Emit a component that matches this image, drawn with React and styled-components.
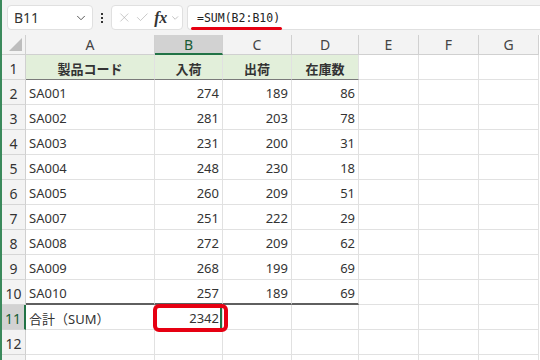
import React from "react";
import styled, { createGlobalStyle } from "styled-components";
import { X, Check, ChevronDown } from "lucide-react";

const GREEN = "#217346";
const GRID = "#e1e1e1";

const COLUMNS = [
  { id: "A", width: 129 },
  { id: "B", width: 68 },
  { id: "C", width: 69 },
  { id: "D", width: 67 },
  { id: "E", width: 60 },
  { id: "F", width: 60 },
  { id: "G", width: 60 },
];

const ROWS = [
  ["SA001", 274, 189, 86],
  ["SA002", 281, 203, 78],
  ["SA003", 231, 200, 31],
  ["SA004", 248, 230, 18],
  ["SA005", 260, 209, 51],
  ["SA007", 251, 222, 29],
  ["SA008", 272, 209, 62],
  ["SA009", 268, 199, 69],
  ["SA010", 257, 189, 69],
];

const GlobalStyle = createGlobalStyle`
  body {
    margin: 0;
    background: #fff;
    font-family: "Noto Sans", "Noto Sans CJK JP", sans-serif;
  }
`;

const Window = styled.div`
  width: 540px;
  height: 360px;
  overflow: hidden;
  border-left: 2px solid #3b8a5c;
  box-sizing: border-box;
  background: #fff;
`;

const Toolbar = styled.div`
  height: 35px;
  box-sizing: border-box;
  padding: 5px 0 0 5px;
  background: #f3f3f3;
  display: flex;
  align-items: flex-start;
  gap: 4px;
`;

const Box = styled.div`
  height: 25px;
  box-sizing: border-box;
  background: #fff;
  border: 1px solid #e0e0e0;
  border-radius: 4px;
  display: flex;
  align-items: center;
`;

const NameBox = styled(Box)`
  width: 86px;
  padding: 0 4px 0 6px;
  justify-content: space-between;
  font-size: 14px;
  color: #333;
`;

const Dots = styled.div`
  width: 10px;
  height: 25px;
  display: flex;
  flex-direction: column;
  align-items: center;
  justify-content: center;
  gap: 2px;

  span {
    width: 2px;
    height: 2px;
    background: #333;
  }
`;

const ButtonBox = styled(Box)`
  width: 72px;
  padding: 0 2px 0 5px;
  gap: 3px;
  color: #a8a8a8;
`;

const Fx = styled.span`
  font-family: "Liberation Serif", serif;
  font-style: italic;
  font-weight: 700;
  font-size: 16px;
  color: #333;
  margin-left: 2px;
  letter-spacing: -0.5px;
`;

const FormulaBox = styled(Box)`
  flex: 1;
  border-right: none;
  border-radius: 4px 0 0 4px;
  padding-left: 9px;
`;

const Formula = styled.span`
  position: relative;
  font-family: "DejaVu Sans Mono", monospace;
  font-size: 11.5px;
  color: #222;

  &::after {
    content: "";
    position: absolute;
    left: -6px;
    right: -2px;
    bottom: -5px;
    height: 3px;
    background: #e60012;
    border-radius: 2px;
  }
`;

const Sheet = styled.div`
  display: grid;
  grid-template-columns: 24px ${COLUMNS.map((c) => c.width + "px").join(" ")};
  grid-template-rows: 20px repeat(13, 25px);
`;

const Corner = styled.div`
  background: #f3f3f3;
  border-right: 1px solid #d0d0d0;
  border-bottom: 1px solid #d0d0d0;
  position: relative;
  overflow: hidden;

  &::after {
    content: "";
    position: absolute;
    right: 3px;
    bottom: 3px;
    border-style: solid;
    border-width: 0 0 13px 13px;
    border-color: transparent transparent #bdbdbd transparent;
  }
`;

const ColHead = styled.div`
  box-sizing: border-box;
  display: flex;
  align-items: center;
  justify-content: center;
  font-size: 14px;
  color: ${({ $active }) => ($active ? "#1a5c36" : "#444")};
  background: ${({ $active }) => ($active ? "#d2d2d2" : "#f3f3f3")};
  border-right: 1px solid #d0d0d0;
  border-bottom: ${({ $active }) =>
    $active ? `2px solid ${GREEN}` : "1px solid #d0d0d0"};
`;

const RowHead = styled.div`
  box-sizing: border-box;
  display: flex;
  align-items: center;
  justify-content: center;
  padding-top: 2px;
  font-size: 14px;
  color: ${({ $active }) => ($active ? "#1a5c36" : "#333")};
  background: ${({ $active }) => ($active ? "#d2d2d2" : "#f3f3f3")};
  border-bottom: 1px solid #d6d6d6;
  border-right: ${({ $active }) =>
    $active ? `2px solid ${GREEN}` : "1px solid #d0d0d0"};
`;

const Cell = styled.div`
  position: relative;
  z-index: ${({ $selected }) => ($selected ? 2 : "auto")};
  box-sizing: border-box;
  display: flex;
  align-items: center;
  justify-content: ${({ $align }) =>
    $align === "right" ? "flex-end" : $align === "center" ? "center" : "flex-start"};
  padding: 2px 3px 0 3px;
  font-size: 13px;
  font-weight: ${({ $bold }) => ($bold ? 700 : 400)};
  color: #333;
  background: ${({ $bg }) => $bg || "#fff"};
  border-right: 1px solid ${GRID};
  border-bottom: ${({ $line }) =>
    $line === "thick"
      ? "2px solid #5f5f5f"
      : $line === "dark"
      ? "1px solid #7a7a7a"
      : `1px solid ${GRID}`};
  box-shadow: ${({ $selected }) =>
    $selected ? `inset -2px 0 0 ${GREEN}` : "none"};
`;

const Highlight = styled.div`
  position: absolute;
  left: -2px;
  right: -6px;
  top: -1px;
  bottom: -3px;
  border: 4px solid #e60012;
  border-radius: 6px;
  pointer-events: none;
`;

const HEADERS = ["製品コード", "入荷", "出荷", "在庫数"];

const App = () => {
  const renderRow = (num, values, opts = {}) => (
    <React.Fragment key={num}>
      <RowHead $active={opts.activeRow}>{opts.hideNumber ? null : num}</RowHead>
      {COLUMNS.map((col, i) => {
        const value = values[i];
        const inTable = i < 4;
        const selected = opts.activeRow && i === 1;
        return (
          <Cell
            key={col.id}
            $align={opts.header ? "center" : i === 0 ? "left" : "right"}
            $bold={opts.header}
            $bg={opts.header && inTable ? "#e2efda" : undefined}
            $line={inTable ? opts.line : undefined}
            $selected={selected}
          >
            {value}
            {selected && <Highlight />}
          </Cell>
        );
      })}
    </React.Fragment>
  );

  return (
    <>
      <GlobalStyle />
      <Window>
        <Toolbar>
          <NameBox>
            B11
            <ChevronDown size={14} strokeWidth={1.5} color="#444" />
          </NameBox>
          <Dots>
            <span />
            <span />
            <span />
          </Dots>
          <ButtonBox>
            <X size={17} strokeWidth={1} />
            <Check size={17} strokeWidth={1} />
            <Fx>fx</Fx>
            <ChevronDown size={12} strokeWidth={1.2} color="#888" />
          </ButtonBox>
          <FormulaBox>
            <Formula>=SUM(B2:B10)</Formula>
          </FormulaBox>
        </Toolbar>
        <Sheet>
          <Corner />
          {COLUMNS.map((col) => (
            <ColHead key={col.id} $active={col.id === "B"}>
              {col.id}
            </ColHead>
          ))}
          {renderRow(1, HEADERS, { header: true, line: "dark" })}
          {ROWS.map((row, i) =>
            renderRow(i + 2, row, { line: i === ROWS.length - 1 ? "thick" : undefined })
          )}
          {renderRow(11, ["合計（SUM）", 2342], { activeRow: true })}
          {renderRow(12, [])}
          {renderRow(13, [], { hideNumber: true })}
        </Sheet>
      </Window>
    </>
  );
};

export default App;
